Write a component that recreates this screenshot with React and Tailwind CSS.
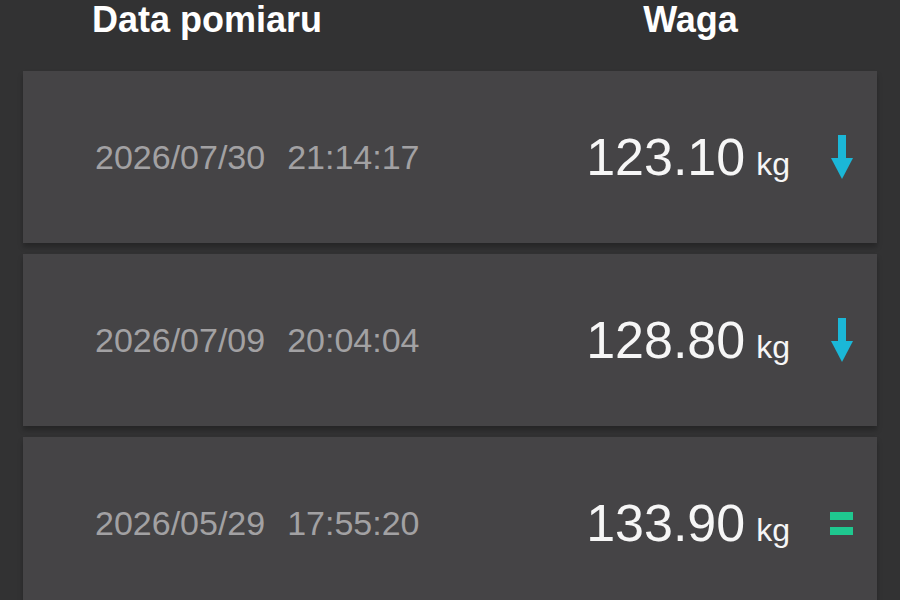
import React from "react";

const rows = [
  { date: "2026/07/30", time: "21:14:17", weight: "123.10", trend: "down" },
  { date: "2026/07/09", time: "20:04:04", weight: "128.80", trend: "down" },
  { date: "2026/05/29", time: "17:55:20", weight: "133.90", trend: "same" },
];

function DownArrow() {
  return (
    <svg width="22" height="44" viewBox="0 0 22 44">
      <rect x="7" y="0" width="8" height="24" fill="#1bb7d7" />
      <polygon points="0,23 22,23 11,44" fill="#1bb7d7" />
    </svg>
  );
}

function Equals() {
  return (
    <div className="flex w-[23px] flex-col gap-[7px]">
      <div className="h-[8px] w-[23px] bg-[#1fc88f]" />
      <div className="h-[8px] w-[23px] bg-[#1fc88f]" />
    </div>
  );
}

export default function App() {
  return (
    <div
      className="h-[600px] w-[900px] overflow-hidden bg-[#323233]"
      style={{ fontFamily: '"Liberation Sans", Arial, sans-serif' }}
    >
      <div className="flex h-[71px] items-start pt-[2px] text-[36px] font-bold leading-none text-white">
        <div className="w-[553px] pl-[92px]">Data pomiaru</div>
        <div className="w-[275px] text-center">Waga</div>
      </div>
      <div className="flex flex-col gap-[11px] pl-[23px] pr-[23px]">
        {rows.map((r, i) => (
          <div
            key={i}
            className="flex h-[172px] items-center bg-[#454446] pl-[72px] pr-[24px] shadow-[0_4px_5px_rgba(0,0,0,0.25)]"
          >
            <div className="flex gap-[22px] text-[34px] leading-none text-[#a2a1a3]">
              <span>{r.date}</span>
              <span>{r.time}</span>
            </div>
            <div className="flex-1" />
            <div className="flex items-baseline gap-[11px] text-[#f6f6f6] leading-none">
              <span className="text-[52px]">{r.weight}</span>
              <span className="text-[32px]">kg</span>
            </div>
            <div className="ml-[40px] flex w-[23px] items-center justify-center">
              {r.trend === "down" ? <DownArrow /> : <Equals />}
            </div>
          </div>
        ))}
      </div>
    </div>
  );
}
